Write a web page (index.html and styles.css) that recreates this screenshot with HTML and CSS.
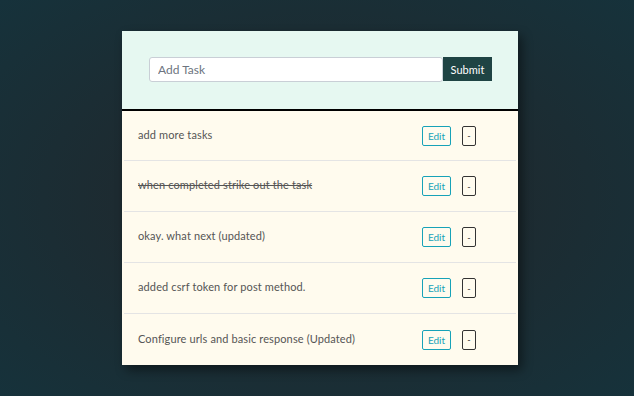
FILE: index.html
```html
<!DOCTYPE html>
<html lang="en">
<head>
    <meta charset="UTF-8">
    <meta name="viewport" content="width=device-width, initial-scale=1.0">
    <title>Todo List</title>
    <link rel="stylesheet" href="styles.css">
</head>
<body>
    <main class="page">
        <section class="todo-card">
            <form class="todo-form" onsubmit="return false">
                <input type="text" class="todo-input" placeholder="Add Task">
                <button type="submit" class="submit-btn">Submit</button>
            </form>
            <ul class="todo-list">
                <li class="todo-item">
                    <span class="todo-text">add more tasks</span>
                    <div class="todo-actions">
                        <button class="edit-btn">Edit</button>
                        <button class="delete-btn">-</button>
                    </div>
                </li>
                <li class="todo-item">
                    <span class="todo-text done">when completed strike out the task</span>
                    <div class="todo-actions">
                        <button class="edit-btn">Edit</button>
                        <button class="delete-btn">-</button>
                    </div>
                </li>
                <li class="todo-item">
                    <span class="todo-text">okay. what next (updated)</span>
                    <div class="todo-actions">
                        <button class="edit-btn">Edit</button>
                        <button class="delete-btn">-</button>
                    </div>
                </li>
                <li class="todo-item">
                    <span class="todo-text">added csrf token for post method.</span>
                    <div class="todo-actions">
                        <button class="edit-btn">Edit</button>
                        <button class="delete-btn">-</button>
                    </div>
                </li>
                <li class="todo-item">
                    <span class="todo-text">Configure urls and basic response (Updated)</span>
                    <div class="todo-actions">
                        <button class="edit-btn">Edit</button>
                        <button class="delete-btn">-</button>
                    </div>
                </li>
            </ul>
        </section>
    </main>
</body>
</html>
```

FILE: styles.css
```css
:root {
    --header-color: #e6f8f1;
    --list-color: #fffbee;
    --accent-color: #17a2b8;
    --dark-teal: #1f4444;
}

* {
    box-sizing: border-box;
}

body {
    margin: 0;
    height: 396px;
    font-family: Lato, "Open Sans", sans-serif;
    background: radial-gradient(ellipse at center, #1f292d 0%, #1d2b31 45%, #16323b 100%);
}

.page {
    display: flex;
    justify-content: center;
    padding: 31px 0 0 6px;
}

.todo-card {
    width: 396px;
    background: var(--list-color);
    box-shadow: 4px 5px 10px rgba(0, 0, 0, 0.45);
}

.todo-form {
    display: flex;
    align-items: flex-start;
    height: 80px;
    padding: 26px 26px 0 27px;
    background: var(--header-color);
    border-bottom: 2px solid #000;
}

.todo-input {
    width: 294px;
    height: 25px;
    padding: 0 8px;
    border: 1px solid #c9cfd6;
    border-radius: 3px;
    font-family: inherit;
    font-size: 12px;
    color: #333;
    background: #fff;
}

.todo-input::placeholder {
    color: #6c7480;
}

.submit-btn {
    width: 49px;
    height: 24px;
    border: none;
    background: var(--dark-teal);
    color: #fff;
    font-family: inherit;
    font-size: 11px;
    cursor: pointer;
}

.todo-list {
    list-style: none;
    margin: 0;
    padding: 0;
}

.todo-item {
    display: flex;
    align-items: center;
    justify-content: space-between;
    height: 51px;
    margin: 0 2px;
    padding: 0 40px 0 14px;
    border-bottom: 1px solid #e4e4e4;
}

.todo-item:first-child {
    height: 50px;
}

.todo-item:last-child {
    border-bottom: none;
}

.todo-text {
    font-size: 11px;
    letter-spacing: 0.12px;
    color: #555;
    padding-bottom: 3px;
}

.todo-text.done {
    text-decoration: line-through;
}

.todo-actions {
    display: flex;
    gap: 11px;
}

.edit-btn {
    width: 29px;
    height: 20px;
    padding: 0;
    border: 1px solid var(--accent-color);
    border-radius: 2px;
    background: transparent;
    color: var(--accent-color);
    font-family: inherit;
    font-size: 10px;
    cursor: pointer;
}

.delete-btn {
    width: 14px;
    height: 20px;
    padding: 0;
    border: 1px solid #333;
    border-radius: 2px;
    background: transparent;
    color: #333;
    font-family: inherit;
    font-size: 9px;
    cursor: pointer;
}
```
